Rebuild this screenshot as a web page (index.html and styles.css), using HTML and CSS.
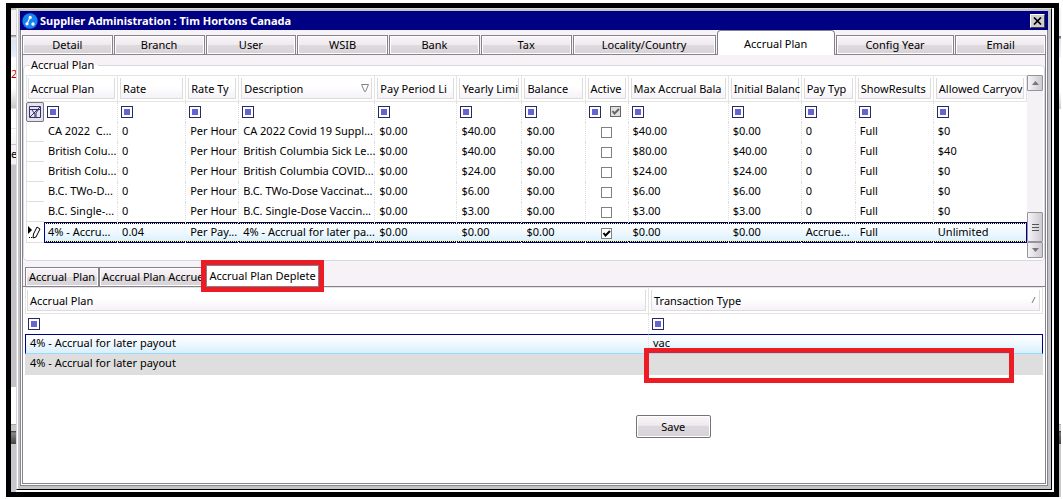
FILE: index.html
```
<!DOCTYPE html>
<html lang="en">
<head>
  <meta charset="UTF-8" />
  <meta name="viewport" content="width=device-width, initial-scale=1.0"/>
  <title>Supplier Administration</title>
  <link rel="stylesheet" href="styles.css">
</head>
<body>
  <div class="desktop">
    <div class="frame">
      <div class="behind"><span class="behind-red">2</span><span class="behind-text">e</span></div>
      <div class="dialog">
        <header class="titlebar">
          <svg class="logo" viewBox="0 0 16 16" aria-hidden="true">
            <circle cx="8" cy="8" r="7.7" fill="#1683f0"/>
            <path d="M8.2 4L5 11" stroke="#fff" stroke-width="1.2"/>
            <circle cx="8.2" cy="4.4" r="1.6" fill="#fff"/>
            <circle cx="5" cy="10.8" r="1.6" fill="#fff"/>
            <circle cx="11" cy="11" r="1.7" fill="#fff"/>
          </svg>
          <h1>Supplier Administration : Tim Hortons Canada</h1>
          <button class="close" aria-label="Close">
            <svg viewBox="0 0 9 8"><path d="M1 0.5L8 7.5M8 0.5L1 7.5" stroke="#000" stroke-width="1.7"/></svg>
          </button>
        </header>
        <main class="client">
          <nav class="tabs">
            <button class="tab">Detail</button>
            <button class="tab">Branch</button>
            <button class="tab">User</button>
            <button class="tab">WSIB</button>
            <button class="tab">Bank</button>
            <button class="tab">Tax</button>
            <button class="tab tab-xl">Locality/Country</button>
            <button class="tab tab-lg active">Accrual Plan</button>
            <button class="tab tab-lg">Config Year</button>
            <button class="tab">Email</button>
          </nav>
          <section class="panel">
            <fieldset class="group">
              <legend>Accrual Plan</legend>
              <div class="grid-wrap">
                <table class="grid">
                  <colgroup>
                    <col class="w18"><col class="w74"><col class="w68"><col class="w53"><col class="w136"><col class="w82"><col class="w65">
                    <col class="w63"><col class="w43"><col class="w100"><col class="w73"><col class="w54"><col class="w78"><col class="w93">
                  </colgroup>
                  <thead>
                    <tr>
                      <th colspan="2"><div>Accrual Plan</div></th>
                      <th><div>Rate</div></th>
                      <th><div>Rate Ty</div></th>
                      <th><div class="sorted">Description
                        <svg class="sort" viewBox="0 0 8 8"><path d="M0.5 0.5H7.5L4.5 7.5H3.5Z" fill="none" stroke="#848484"/></svg></div></th>
                      <th><div>Pay Period Li</div></th>
                      <th><div>Yearly Limi</div></th>
                      <th><div>Balance</div></th>
                      <th><div>Active</div></th>
                      <th><div>Max Accrual Bala</div></th>
                      <th><div>Initial Balanc</div></th>
                      <th><div>Pay Typ</div></th>
                      <th><div>ShowResults</div></th>
                      <th><div>Allowed Carryov</div></th>
                    </tr>
                    <tr class="filter">
                      <td class="clear-cell">
                        <button class="clear" aria-label="Clear filters">
                          <svg viewBox="0 0 12 12"><path d="M0.5 0.5H11.5V11.5H0.5ZM0.5 3.5H11.5M3 4L6 8V11M9 4L7 7V11M1 11L11 1" fill="none" stroke="#33336c"/></svg>
                        </button>
                      </td>
                      <td><button class="op" aria-label="Filter plan"></button></td>
                      <td><button class="op" aria-label="Filter rate"></button></td>
                      <td><button class="op" aria-label="Filter rate type"></button></td>
                      <td><button class="op" aria-label="Filter description"></button></td>
                      <td><button class="op" aria-label="Filter pay period limit"></button></td>
                      <td><button class="op" aria-label="Filter yearly limit"></button></td>
                      <td><button class="op" aria-label="Filter balance"></button></td>
                      <td><div class="op-pair"><button class="op" aria-label="Filter active"></button><input type="checkbox" class="check mixed" checked aria-label="Active filter value"></div></td>
                      <td><button class="op" aria-label="Filter max balance"></button></td>
                      <td><button class="op" aria-label="Filter initial balance"></button></td>
                      <td><button class="op" aria-label="Filter pay type"></button></td>
                      <td><button class="op" aria-label="Filter show results"></button></td>
                      <td><button class="op" aria-label="Filter carryover"></button></td>
                    </tr>
                  </thead>
                  <tbody>
                    <tr><td class="mark"></td><td>CA 2022 &nbsp;C...</td><td>0</td><td>Per Hour</td><td>CA 2022 Covid 19 Suppl...</td><td>$0.00</td><td>$40.00</td><td>$0.00</td><td class="mid"><input type="checkbox" class="check" aria-label="Active"></td><td>$40.00</td><td>$0.00</td><td>0</td><td>Full</td><td>$0</td></tr>
                    <tr><td class="mark"></td><td>British Colu...</td><td>0</td><td>Per Hour</td><td>British Columbia Sick Le...</td><td>$0.00</td><td>$40.00</td><td>$0.00</td><td class="mid"><input type="checkbox" class="check" aria-label="Active"></td><td>$80.00</td><td>$40.00</td><td>0</td><td>Full</td><td>$40</td></tr>
                    <tr><td class="mark"></td><td>British Colu...</td><td>0</td><td>Per Hour</td><td>British Columbia COVID...</td><td>$0.00</td><td>$24.00</td><td>$0.00</td><td class="mid"><input type="checkbox" class="check" aria-label="Active"></td><td>$24.00</td><td>$24.00</td><td>0</td><td>Full</td><td>$0</td></tr>
                    <tr><td class="mark"></td><td>B.C. TWo-D...</td><td>0</td><td>Per Hour</td><td>B.C. TWo-Dose Vaccinat...</td><td>$0.00</td><td>$6.00</td><td>$0.00</td><td class="mid"><input type="checkbox" class="check" aria-label="Active"></td><td>$6.00</td><td>$6.00</td><td>0</td><td>Full</td><td>$0</td></tr>
                    <tr><td class="mark"></td><td>B.C. Single-...</td><td>0</td><td>Per Hour</td><td>B.C. Single-Dose Vaccin...</td><td>$0.00</td><td>$3.00</td><td>$0.00</td><td class="mid"><input type="checkbox" class="check" aria-label="Active"></td><td>$3.00</td><td>$3.00</td><td>0</td><td>Full</td><td>$0</td></tr>
                    <tr class="selected"><td class="mark"><svg class="pencil" viewBox="0 0 14 14"><path d="M1 1V9L5 5Z" fill="#000"/><path d="M10 2L13 4L9 12L6 13L6.500 9Z" fill="#fff" stroke="#000"/><path d="M2 12.500H3M4 12.500H5" stroke="#000"/></svg></td><td>4% - Accru...</td><td>0.04</td><td>Per Pay...</td><td>4% - Accrual for later pa...</td><td>$0.00</td><td>$0.00</td><td>$0.00</td><td class="mid"><input type="checkbox" class="check" checked aria-label="Active"></td><td>$0.00</td><td>$0.00</td><td>Accrue...</td><td>Full</td><td>Unlimited</td></tr>
                  </tbody>
                </table>
                <div class="scrollbar">
                  <button class="arrow" aria-label="Scroll up"><svg viewBox="0 0 7 4"><path d="M0 4L3.500 0L7 4Z" fill="#777"/></svg></button>
                  <div class="track"><div class="thumb"><i></i><i></i><i></i></div></div>
                  <button class="arrow" aria-label="Scroll down"><svg viewBox="0 0 7 4"><path d="M0 0L3.500 4L7 0Z" fill="#777"/></svg></button>
                </div>
              </div>
            </fieldset>
            <nav class="subtabs">
              <button class="subtab">Accrual &nbsp;Plan</button>
              <button class="subtab">Accrual Plan Accrue</button>
              <button class="subtab active">Accrual Plan Deplete<span class="callout tab-callout"></span></button>
            </nav>
            <div class="subpanel">
              <table class="grid deplete">
                <colgroup><col class="w624"><col class="w394"></colgroup>
                <thead>
                  <tr>
                    <th><div>Accrual Plan</div></th>
                    <th><div class="sorted">Transaction Type
                      <svg class="sort" viewBox="0 0 8 8"><path d="M3 7L6 1" stroke="#777"/></svg></div></th>
                  </tr>
                  <tr class="filter">
                    <td><button class="op" aria-label="Filter plan"></button></td>
                    <td><button class="op" aria-label="Filter transaction type"></button></td>
                  </tr>
                </thead>
                <tbody>
                  <tr class="current"><td>4% - Accrual for later payout</td><td>vac</td></tr>
                  <tr class="new"><td>4% - Accrual for later payout</td><td class="empty"><span class="callout cell-callout"></span></td></tr>
                </tbody>
              </table>
              <button class="save">Save</button>
            </div>
          </section>
        </main>
      </div>
    </div>
  </div>
</body>
</html>
```
FILE: styles.css
```
* { margin: 0; padding: 0; box-sizing: border-box; }
body {
  font-family: "Noto Sans", sans-serif;
  font-size: 11px;
  line-height: 16px;
  color: #000;
  background: #fff;
}
button, input {
  font: inherit;
  color: inherit;
}
svg { display: block; }

/* window that shows round the dialog */
.desktop {
  display: flex;
  min-height: calc(100vh - 5px);
  margin: 3px 2px 2px 6px;
  padding-right: 2px;
  background: linear-gradient(#fff 5px, #f5f1f6 6px, #f5f1f6 33px, #777 33px, #777 35px, #dde2f5 36px, #f0f3ff 54px, #fff 55px, #fff 88px, #ccc 106px, #fff 106px, #fff 421px, #888 421px, #ccc 422px, #ccc 428px, #333 428px, #777 430px, #444 441px, #c8c8cc 441px);
}
.frame {
  position: relative;
  display: flex;
  flex: 1;
  border: 5px solid #000;
  padding: 0 2px 2px 5px;
  background: #fff;
}
.behind {
  position: absolute;
  left: 0;
  top: 0;
  bottom: 0;
  width: 5px;
  overflow: hidden;
  background: linear-gradient(#bbb 2px, #f5f1f6 2px, #f5f1f6 27px, #777 27px, #eee 30px, #dde2f5 33px, #e8ecfc 48px, #fff 50px, #fff 80px, #c8c8c8 100px, #fff 101px, #fff 120px, #bcd 120px, #fff 121px, #f4f2f6 136px, #999 136px, #f4f2f6 137px, #f4f2f6 156px, #c4c2c6 157px, #c4c2c6 379px, #fff 379px, #fff 416px, #888 416px, #c8c8cc 417px, #c8c8cc 423px, #333 423px, #888 425px, #444 436px, #c8c8cc 436px);
}
.behind span {
  position: absolute;
  left: 0;
}
.behind-red { top: 58px; color: #c00; }
.behind-text { top: 138px; }

.dialog {
  display: flex;
  flex-direction: column;
  flex: 1;
  min-width: 0;
  border: 1px solid #d8d8d8;
  border-right-color: #000;
  border-bottom-color: #000;
  padding: 2px 3px 3px;
  background: #c4c4c8;
  box-shadow: inset 1px 0 #fff;
}
.titlebar {
  display: flex;
  align-items: center;
  gap: 2px;
  height: 19px;
  padding: 0 3px 0 2px;
  background: #000084;
  color: #fff;
}
.logo { width: 16px; height: 16px; }
.titlebar h1 {
  flex: 1;
  font-size: 11px;
  line-height: 18px;
}
.close {
  display: flex;
  align-items: center;
  justify-content: center;
  width: 15px;
  height: 14px;
  border: 1px solid;
  border-color: #fff #404040 #404040 #fff;
  background: #d0ccd0;
}
.close svg { width: 9px; height: 8px; }

.client {
  display: flex;
  flex-direction: column;
  flex: 1;
  border: 1px solid #85858c;
  border-top: 0;
  padding: 0 1px 1px;
  background: #fff;
}
.tabs {
  display: flex;
  align-items: flex-end;
  gap: 1px;
  height: 25px;
  border-bottom: 1px solid #85828c;
  background: #f6f2f6;
}
.tab, .subtab {
  border: 1px solid #85828c;
  border-bottom: 0;
  background: linear-gradient(#f8f4f8, #eeeaee 50%, #dedade 51%, #d6d2d6);
  box-shadow: inset 0 0 0 1px #fff;
}
.tab {
  flex: 90 1 0;
  height: 19px;
  padding-bottom: 1px;
}
.tab-lg { flex-grow: 118; }
.tab-xl { flex-grow: 143; }
.tab.active {
  height: 25px;
  margin-bottom: -1px;
  padding-top: 3px;
  border-radius: 4px 4px 0 0;
  background: #fff;
}
.panel {
  display: flex;
  flex-direction: column;
  flex: 1;
  border: 1px solid #85828c;
  border-top: 0;
  background: #f6f2f6;
}
.group {
  min-width: 0;
  border: 1px solid #d5dae2;
  border-radius: 4px;
  padding: 0 1px 17px 2px;
  background: #fff;
}
.group legend {
  margin-left: 4px;
  padding: 0 4px 0 1px;
  line-height: 20px;
}
.grid-wrap { display: flex; }
.grid {
  flex: 1;
  width: 100%;
  min-width: 0;
  table-layout: fixed;
  border-collapse: separate;
  border-spacing: 0;
}
.w18 { width: 18px; }
.w43 { width: 43px; }
.w53 { width: 53px; }
.w54 { width: 54px; }
.w63 { width: 63px; }
.w65 { width: 65px; }
.w68 { width: 68px; }
.w73 { width: 73px; }
.w74 { width: 74px; }
.w78 { width: 78px; }
.w82 { width: 82px; }
.w93 { width: 93px; }
.w100 { width: 100px; }
.w136 { width: 136px; }
.w394 { width: 394px; }
.w624 { width: 624px; }
.grid th {
  height: 27px;
  padding: 2px;
  border: 1px solid #e4e4e4;
  border-left-width: 0;
  font-weight: normal;
  text-align: left;
}
.grid th:first-child {
  padding-left: 1px;
  border-left-width: 1px;
}
.grid th div {
  height: 21px;
  padding-left: 2px;
  border: 1px solid #dcdcdc;
  border-top: 0;
  background: linear-gradient(#fff 40%, #f6f2f8);
  line-height: 21px;
  white-space: nowrap;
}
.grid .sorted {
  display: flex;
  align-items: center;
  justify-content: space-between;
  padding-right: 2px;
}
.sort { width: 8px; height: 8px; }
.grid td {
  height: 20px;
  padding: 0 0 2px 4px;
  border-right: 1px dotted #ddd;
  white-space: nowrap;
}
.grid td:last-child { border-right: 0; }
.grid .filter td {
  height: 20px;
  padding: 0 3px 1px;
  vertical-align: middle;
}
.op {
  display: block;
  width: 12px;
  height: 12px;
  border: 1px solid #29295f;
  background: #6464d2;
  box-shadow: inset 0 0 0 2px #fff;
}
.op-pair {
  display: flex;
  gap: 9px;
}
.grid .filter .clear-cell { padding: 0; }
.clear {
  display: flex;
  align-items: center;
  justify-content: center;
  width: 18px;
  height: 20px;
  border: 1px solid #77747c;
  border-radius: 2px;
  background: #e6e2ee;
}
.clear svg { width: 12px; height: 12px; }
.check {
  appearance: none;
  display: block;
  width: 11px;
  height: 11px;
  border: 1px solid #808080;
  background: #fff;
}
.check:checked {
  background: #fff url("data:image/svg+xml,%3Csvg xmlns='http://www.w3.org/2000/svg' viewBox='0 0 9 9'%3E%3Cpath d='M1.500 4L3.500 6.500L8 2' fill='none' stroke='%23000' stroke-width='2'/%3E%3C/svg%3E");
}
.check.mixed {
  border-color: #000;
  background-color: #ccc;
  opacity: 0.6;
}
.grid .mid { padding: 1px 15px 0; }
.grid td.mark {
  padding: 0;
  border-left: 1px solid #e4e4e4;
  border-right: 0;
  border-bottom: 1px solid #dedede;
}
.pencil { width: 14px; height: 14px; }

/* focused row: navy edge with a dotted yellow line inside it */
.selected td:not(.mark) {
  height: 21px;
  border-right-color: #eaf3fa;
  background:
    linear-gradient(#000084, #000084) top / 100% 1px no-repeat border-box,
    linear-gradient(#000084, #000084) bottom / 100% 1px no-repeat border-box,
    repeating-linear-gradient(90deg, #000 0 1px, #ffff84 1px 2px) 0 1px / 100% 1px no-repeat border-box,
    repeating-linear-gradient(90deg, #000 0 1px, #ffff84 1px 2px) 0 19px / 100% 1px no-repeat border-box,
    linear-gradient(#fff, #eef8fe 50%, #d8effc) border-box;
}
.selected td:nth-child(2) { box-shadow: inset 1px 0 #000084; }
.selected td:last-child { box-shadow: inset -1px 0 #000084; }

.scrollbar {
  display: flex;
  flex-direction: column;
  width: 16px;
  margin-bottom: -15px;
  background: #f5f2f6;
}
.arrow, .thumb {
  display: flex;
  align-items: center;
  justify-content: center;
  border: 1px solid #96939a;
  border-radius: 1px;
  background: linear-gradient(90deg, #f6f4f8, #ccc9d0);
}
.arrow { height: 16px; }
.arrow svg { width: 7px; height: 4px; }
.track {
  display: flex;
  flex: 1;
  align-items: flex-end;
}
.thumb {
  flex-direction: column;
  gap: 2px;
  width: 100%;
  height: 30px;
}
.thumb i {
  width: 7px;
  height: 1px;
  background: #555;
}

.subtabs {
  display: flex;
  align-items: flex-end;
  height: 25px;
  padding-left: 2px;
}
.subtab {
  height: 19px;
  padding: 0 2px;
  white-space: nowrap;
}
.subtab:first-child { padding: 0 3px; }
.subtab.active {
  position: relative;
  height: 21px;
  background: #fff;
}
.callout {
  position: absolute;
  border: 5px solid #ed1c24;
  pointer-events: none;
}
.tab-callout { inset: -6px; }
.subpanel {
  flex: 1;
  border-top: 1px solid #85828c;
  padding: 0 2px;
  background: #fff;
}
.current td {
  border-top: 1px solid #000084;
  border-bottom: 1px solid #9bdcf8;
  background: linear-gradient(#fff, #eef8fe 50%, #d8effc);
}
.current td:first-child { border-left: 1px solid #000084; }
.grid .current td:last-child { border-right: 1px solid #000084; }
.grid .new td {
  height: 21px;
  padding: 0 0 4px 5px;
  border-right: 0;
  background: #dedede;
}
.grid .new .empty { position: relative; }
.cell-callout { inset: -6px 29px -8px -5px; }
.save {
  display: block;
  width: 75px;
  height: 23px;
  margin: 40px 0 0 60%;
  border: 1px solid #757278;
  border-radius: 2px;
  background: linear-gradient(#f8f4f8, #eeeaee 45%, #dcd8de 46%, #d6d2d8);
  box-shadow: inset 0 0 0 1px #fff;
}
```
